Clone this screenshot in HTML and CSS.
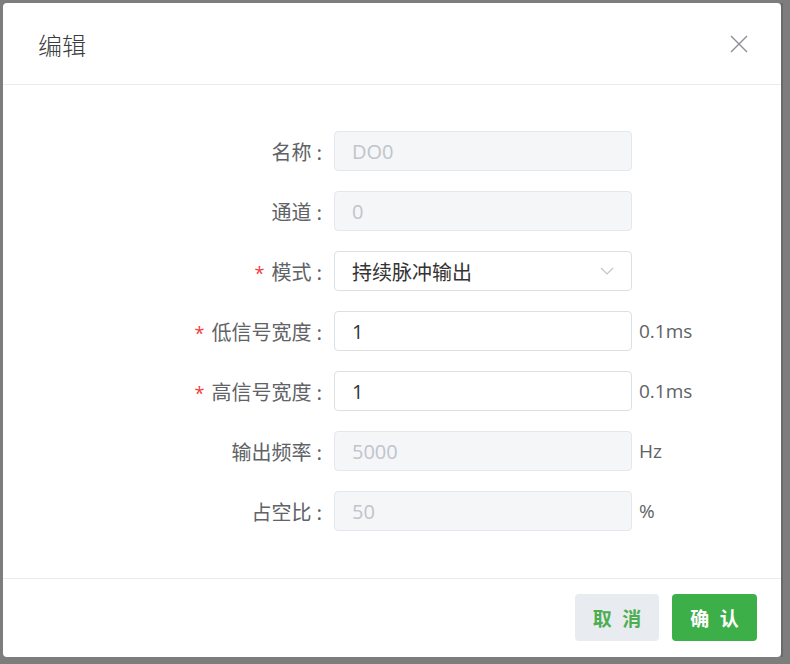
FILE: index.html
```html
<!DOCTYPE html>
<html lang="zh">
<head>
<meta charset="utf-8">
<link rel="stylesheet" href="styles.css">
</head>
<body>
<div class="screen">
  <div class="dialog">
    <div class="dialog-header">
      <span class="dialog-title">编辑</span>
      <svg class="close" width="18" height="18" viewBox="0 0 18 18"><path d="M1 1 L17 17 M17 1 L1 17" stroke="#8c8f96" stroke-width="1.4" fill="none"/></svg>
    </div>
    <div class="dialog-body">
      <div class="form">
        <label class="lbl">名称<span class="colon">:</span></label>
        <div class="input disabled">DO0</div>
        <span class="unit"></span>

        <label class="lbl">通道<span class="colon">:</span></label>
        <div class="input disabled">0</div>
        <span class="unit"></span>

        <label class="lbl"><span class="req">*</span>模式<span class="colon">:</span></label>
        <div class="input select">持续脉冲输出
          <svg class="arrow" width="14" height="8" viewBox="0 0 14 8"><path d="M1 1 L7 7 L13 1" stroke="#c0c4cc" stroke-width="1.2" fill="none"/></svg>
        </div>
        <span class="unit"></span>

        <label class="lbl"><span class="req">*</span>低信号宽度<span class="colon">:</span></label>
        <div class="input">1</div>
        <span class="unit">0.1ms</span>

        <label class="lbl"><span class="req">*</span>高信号宽度<span class="colon">:</span></label>
        <div class="input">1</div>
        <span class="unit">0.1ms</span>

        <label class="lbl">输出频率<span class="colon">:</span></label>
        <div class="input disabled">5000</div>
        <span class="unit">Hz</span>

        <label class="lbl">占空比<span class="colon">:</span></label>
        <div class="input disabled">50</div>
        <span class="unit">%</span>
      </div>
    </div>
    <div class="dialog-footer">
      <button class="btn btn-cancel">取 消</button>
      <button class="btn btn-ok">确 认</button>
    </div>
  </div>
  <div class="side"></div>
</div>
</body>
</html>
```

FILE: styles.css
```css
html, body {
  margin: 0;
  padding: 0;
}
body {
  width: 790px;
  height: 664px;
  background: #7d7d7d;
  font-family: "Open Sans", "Noto Sans CJK SC", sans-serif;
  overflow: hidden;
}
.screen {
  display: flex;
  padding: 3px 0 0 3px;
}
.dialog {
  width: 778px;
  height: 654px;
  background: #fff;
  border-radius: 4px;
  display: flex;
  flex-direction: column;
  box-sizing: border-box;
}
.dialog-header {
  height: 82px;
  border-bottom: 1px solid #ebebeb;
  display: flex;
  align-items: center;
  justify-content: space-between;
  padding: 0 33px 0 35px;
  box-sizing: border-box;
  flex: none;
}
.dialog-title {
  font-size: 24px;
  color: #3a3c40;
  font-family: "Noto Sans CJK SC", sans-serif;
  font-weight: 300;
  margin-top: 1px;
}
.close {
  display: block;
}
.dialog-body {
  flex: 1;
  padding-top: 46px;
  box-sizing: border-box;
}
.form {
  display: grid;
  grid-template-columns: 319px 298px auto;
  grid-auto-rows: 40px;
  column-gap: 12px;
  row-gap: 20px;
}
.form .unit {
  margin-left: -5px;
}
.lbl {
  display: flex;
  align-items: center;
  justify-content: flex-end;
  font-size: 20px;
  color: #606266;
  font-family: "Noto Sans CJK SC", sans-serif;
}
.colon {
  margin-left: 5px;
}
.req {
  color: #f23c3c;
  margin-right: 7px;
  font-size: 18px;
  font-family: "Open Sans", sans-serif;
  margin-top: 3px;
}
.input {
  border: 1px solid #dcdfe6;
  border-radius: 4px;
  box-sizing: border-box;
  display: flex;
  align-items: center;
  padding-left: 17px;
  font-size: 20px;
  color: #333;
  font-family: "Open Sans", "Noto Sans CJK SC", sans-serif;
  position: relative;
}
.input.disabled {
  background: #f5f6f8;
  border-color: #e4e7ed;
  color: #c0c4cc;
}
.input.select {
  justify-content: space-between;
  padding-right: 17px;
}
.unit {
  display: flex;
  align-items: center;
  font-size: 19px;
  color: #606266;
}
.dialog-footer {
  height: 79px;
  border-top: 1px solid #ebebeb;
  box-sizing: border-box;
  display: flex;
  justify-content: flex-end;
  align-items: flex-start;
  padding: 15px 24px 0 0;
  gap: 13px;
  flex: none;
}
.btn {
  width: 84px;
  height: 47px;
  border: none;
  border-radius: 4px;
  font-size: 19px;
  font-weight: bold;
  letter-spacing: 3px;
  text-indent: 3px;
  font-family: "Noto Sans CJK SC", sans-serif;
  cursor: pointer;
}
.btn-cancel {
  background: #e8ebf0;
  color: #4cae50;
}
.btn-ok {
  width: 85px;
  background: #3daf48;
  color: #fff;
}
.side {
  width: 9px;
  height: 654px;
  background: #7d7d7d;
  border-left: 2px solid #6a6a6a;
  box-sizing: border-box;
}
```
